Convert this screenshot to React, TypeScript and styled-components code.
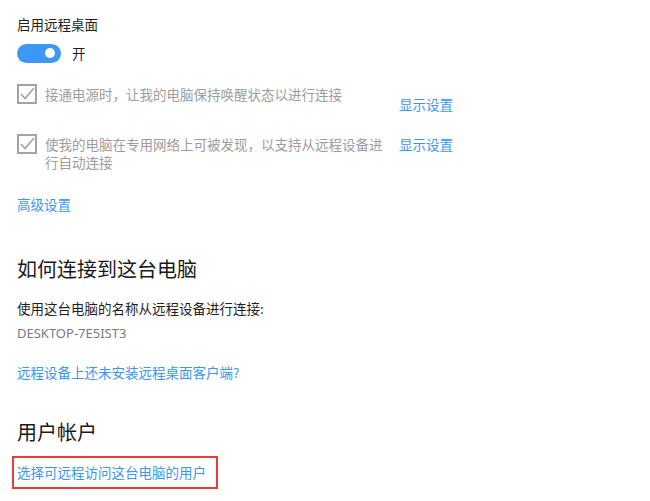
import React from 'react';
import styled, { createGlobalStyle } from 'styled-components';

const GlobalStyle = createGlobalStyle`
  html, body {
    margin: 0;
    padding: 0;
    background: #ffffff;
  }
  body {
    font-family: "Noto Sans CJK SC", "Noto Sans", sans-serif;
    color: #1f1f1f;
  }
`;

const Page = styled.div`
  display: flex;
  flex-direction: column;
  align-items: flex-start;
  padding: 14px 0 0 17px;
  width: 650px;
  height: 501px;
  box-sizing: border-box;
  overflow: hidden;
`;

const Label = styled.div<{ $top?: number }>`
  font-size: 13.5px;
  line-height: 20px;
  color: #1f1f1f;
  margin-top: ${(p) => p.$top ?? 0}px;
`;

const Heading = styled.div<{ $top: number }>`
  font-size: 20px;
  line-height: 28px;
  color: #1a1a1a;
  margin-top: ${(p) => p.$top}px;
`;

const Link = styled.a<{ $top?: number }>`
  display: block;
  font-size: 13.5px;
  line-height: 20px;
  color: #3d96ee;
  text-decoration: none;
  cursor: pointer;
  margin-top: ${(p) => p.$top ?? 0}px;
`;

const ToggleRow = styled.div`
  display: flex;
  align-items: center;
  gap: 11px;
  margin-top: 9px;
`;

const Track = styled.div`
  width: 44px;
  height: 19px;
  border-radius: 10px;
  background: #3c98f4;
  display: flex;
  align-items: center;
  justify-content: flex-end;
  padding-right: 6px;
  box-sizing: border-box;
`;

const Knob = styled.div`
  width: 10px;
  height: 10px;
  border-radius: 50%;
  background: #ffffff;
`;

const ToggleText = styled.span`
  font-size: 13.5px;
  line-height: 20px;
  color: #1f1f1f;
`;

const OptionRow = styled.div<{ $top: number }>`
  display: grid;
  grid-template-columns: 20px 344px auto;
  column-gap: 8px;
  align-items: start;
  margin-top: ${(p) => p.$top}px;
`;

const OptionText = styled.div`
  font-size: 13.5px;
  line-height: 18px;
  color: #9d9d9d;
  margin-top: 1px;
`;

const OptionLink = styled(Link)`
  line-height: 18px;
  margin-left: 2px;
  white-space: nowrap;
`;

const Box = styled.svg`
  display: block;
`;

const HighlightBox = styled.div`
  display: flex;
  margin: 10px 0 0 -5px;
  padding: 4px 10px 5px 3px;
  border: 2px solid #ee3a3a;
`;

const Name = styled.div`
  font-family: "Noto Sans", "Open Sans", sans-serif;
  font-size: 13px;
  line-height: 20px;
  color: #7a7a7a;
  margin-top: 5px;
`;

const CheckBox = () => (
  <Box width="20" height="20" viewBox="0 0 20 20">
    <rect x="1" y="1" width="18" height="18" fill="none" stroke="#a3a3a3" strokeWidth="2" />
    <polyline points="4,10 8,14.5 17,4" fill="none" stroke="#a3a3a3" strokeWidth="1.6" />
  </Box>
);

export default function App() {
  return (
    <>
      <GlobalStyle />
      <Page>
        <Label>启用远程桌面</Label>
        <ToggleRow>
          <Track>
            <Knob />
          </Track>
          <ToggleText>开</ToggleText>
        </ToggleRow>

        <OptionRow $top={21}>
          <CheckBox />
          <OptionText>接通电源时，让我的电脑保持唤醒状态以进行连接</OptionText>
          <OptionLink $top={11}>显示设置</OptionLink>
        </OptionRow>

        <OptionRow $top={21}>
          <CheckBox />
          <OptionText>使我的电脑在专用网络上可被发现，以支持从远程设备进行自动连接</OptionText>
          <OptionLink $top={1}>显示设置</OptionLink>
        </OptionRow>

        <Link $top={23}>高级设置</Link>

        <Heading $top={41}>如何连接到这台电脑</Heading>
        <Label $top={15}>使用这台电脑的名称从远程设备进行连接:</Label>
        <Name>DESKTOP-7E5IST3</Name>
        <Link $top={19}>远程设备上还未安装远程桌面客户端?</Link>

        <Heading $top={36}>用户帐户</Heading>
        <HighlightBox>
          <Link>选择可远程访问这台电脑的用户</Link>
        </HighlightBox>
      </Page>
    </>
  );
}
